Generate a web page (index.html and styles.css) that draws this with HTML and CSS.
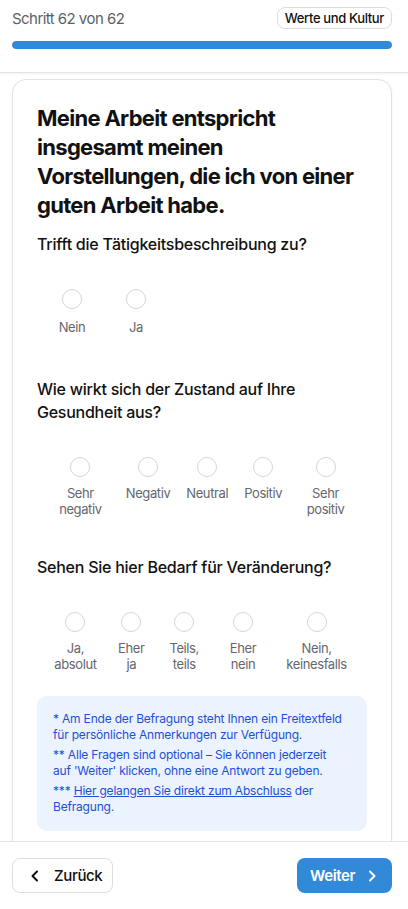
FILE: index.html
```html
<!DOCTYPE html>
<html lang="de">
<head>
<meta charset="utf-8">
<title>Befragung</title>
<link rel="stylesheet" href="styles.css">
</head>
<body>
<div class="app">
  <header class="top">
    <div class="top-row">
      <span class="step">Schritt 62 von 62</span>
      <span class="badge">Werte und Kultur</span>
    </div>
    <div class="progress"><div class="progress-fill" style="width:100%"></div></div>
  </header>

  <main class="content">
    <section class="card">
      <h1 class="title">Meine Arbeit entspricht insgesamt meinen Vorstellungen, die ich von einer guten Arbeit habe.</h1>

      <div class="question">
        <p class="q-text">Trifft die Tätigkeitsbeschreibung zu?</p>
        <div class="options options-two">
          <label class="opt"><span class="radio"></span><span class="opt-label">Nein</span></label>
          <label class="opt"><span class="radio"></span><span class="opt-label">Ja</span></label>
        </div>
      </div>

      <div class="question">
        <p class="q-text">Wie wirkt sich der Zustand auf Ihre Gesundheit aus?</p>
        <div class="options options-five">
          <label class="opt"><span class="radio"></span><span class="opt-label">Sehr negativ</span></label>
          <label class="opt"><span class="radio"></span><span class="opt-label">Negativ</span></label>
          <label class="opt"><span class="radio"></span><span class="opt-label">Neutral</span></label>
          <label class="opt"><span class="radio"></span><span class="opt-label">Positiv</span></label>
          <label class="opt"><span class="radio"></span><span class="opt-label">Sehr positiv</span></label>
        </div>
      </div>

      <div class="question">
        <p class="q-text">Sehen Sie hier Bedarf für Veränderung?</p>
        <div class="options options-five">
          <label class="opt"><span class="radio"></span><span class="opt-label">Ja, absolut</span></label>
          <label class="opt"><span class="radio"></span><span class="opt-label">Eher ja</span></label>
          <label class="opt"><span class="radio"></span><span class="opt-label">Teils, teils</span></label>
          <label class="opt"><span class="radio"></span><span class="opt-label">Eher nein</span></label>
          <label class="opt"><span class="radio"></span><span class="opt-label">Nein, keinesfalls</span></label>
        </div>
      </div>

      <div class="info">
        <p>* Am Ende der Befragung steht Ihnen ein Freitextfeld für persönliche Anmerkungen zur Verfügung.</p>
        <p>** Alle Fragen sind optional – Sie können jederzeit auf&nbsp;'Weiter' klicken, ohne eine Antwort zu geben.</p>
        <p>*** <a href="#" class="info-link">Hier gelangen Sie direkt zum Abschluss</a> der Befragung.</p>
      </div>
    </section>
  </main>

  <footer class="bottom">
    <button class="btn btn-back" type="button">
      <svg class="chev" width="16" height="16" viewBox="0 0 16 16" aria-hidden="true"><path d="M10 3.5 5.5 8l4.5 4.5" fill="none" stroke="currentColor" stroke-width="2" stroke-linecap="round" stroke-linejoin="round"/></svg>
      <span>Zurück</span>
    </button>
    <button class="btn btn-next" type="button">
      <span>Weiter</span>
      <svg class="chev" width="16" height="16" viewBox="0 0 16 16" aria-hidden="true"><path d="M6 3.5 10.5 8 6 12.5" fill="none" stroke="currentColor" stroke-width="2" stroke-linecap="round" stroke-linejoin="round"/></svg>
    </button>
  </footer>
</div>
</body>
</html>
```
FILE: styles.css
```css
* { box-sizing: border-box; }
html, body { margin: 0; padding: 0; }
body {
  font-family: Inter, "Liberation Sans", Arial, sans-serif;
  color: #111;
  background: #fff;
}
.app {
  height: 909px;
  display: flex;
  flex-direction: column;
  overflow: hidden;
}
.top {
  flex: none;
  height: 73px;
  padding: 7px 16px 0 12px;
  border-bottom: 1px solid #e4e4e4;
  box-shadow: 0 1px 3px rgba(0,0,0,0.06);
  background: #fff;
  position: relative;
  z-index: 1;
}
.top-row {
  display: flex;
  justify-content: space-between;
  align-items: center;
  height: 22px;
}
.step {
  font-size: 15px;
  letter-spacing: -0.55px;
  color: #5d5f66;
}
.badge {
  font-size: 13px;
  font-weight: 500;
  letter-spacing: -0.35px;
  color: #111;
  border: 1px solid #dcdcdc;
  border-radius: 8px;
  padding: 0 7px;
  height: 22px;
  line-height: 20px;
}
.progress {
  margin-top: 12px;
  height: 8px;
  border-radius: 4px;
  background: #e5e7eb;
  overflow: hidden;
  width: 380px;
}
.progress-fill {
  height: 100%;
  background: #2f8ad8;
  border-radius: 4px;
}
.content {
  flex: 1;
  overflow: hidden;
  padding: 6px 16px 0 12px;
}
.card {
  width: 380px;
  border: 1px solid #e2e2e2;
  border-radius: 14px;
  padding: 24px 24px 40px;
  box-shadow: 0 1px 3px rgba(0,0,0,0.05);
  background: #fff;
}
.title {
  margin: 0;
  font-size: 22px;
  line-height: 29px;
  font-weight: 700;
  letter-spacing: -0.7px;
  color: #111;
}
.question { margin-top: 13px; }
.question + .question { margin-top: 39px; }
.q-text {
  margin: 0;
  font-size: 16px;
  line-height: 23px;
  font-weight: 500;
  letter-spacing: -0.25px;
  color: #111;
}
.options {
  display: flex;
  gap: 16px;
  margin-top: 33px;
  padding: 0 14px;
}
.options-two { padding: 0 14px 4px 11px; }
.options-two .opt { min-width: 48px; gap: 10px; }
.opt {
  display: flex;
  flex-direction: column;
  align-items: center;
  text-align: center;
  gap: 8px;
}
.radio {
  width: 20px;
  height: 20px;
  border-radius: 50%;
  border: 1px solid #d6d6d6;
  background: #fff;
  flex: none;
}
.opt-label {
  font-size: 13px;
  line-height: 16px;
  letter-spacing: -0.4px;
  color: #66666e;
}
.info {
  margin-top: 24px;
  background: #ebf3fe;
  border-radius: 10px;
  padding: 15px 16px 16px;
  color: #1f4fd6;
  font-size: 12px;
  line-height: 16px;
  letter-spacing: -0.19px;
}
.info p { margin: 0; }
.info p + p { margin-top: 4px; }
.info-link { color: inherit; text-decoration: underline; }
.bottom {
  flex: none;
  height: 68px;
  border-top: 1px solid #e4e4e4;
  background: #fff;
  display: flex;
  justify-content: space-between;
  align-items: flex-start;
  padding: 16px 16px 0 12px;
}
.btn {
  font-family: inherit;
  font-size: 15px;
  font-weight: 500;
  letter-spacing: -0.35px;
  height: 35px;
  border-radius: 8px;
  display: flex;
  align-items: center;
  cursor: pointer;
}
.btn-back {
  width: 101px;
  background: #fff;
  border: 1px solid #dedede;
  color: #111;
  padding: 0 0 0 14px;
  gap: 11px;
}
.btn-next {
  width: 95px;
  background: #3189d8;
  border: none;
  color: #fff;
  font-weight: 600;
  padding: 0 0 0 13px;
  gap: 9px;
}
.chev { flex: none; }
```
